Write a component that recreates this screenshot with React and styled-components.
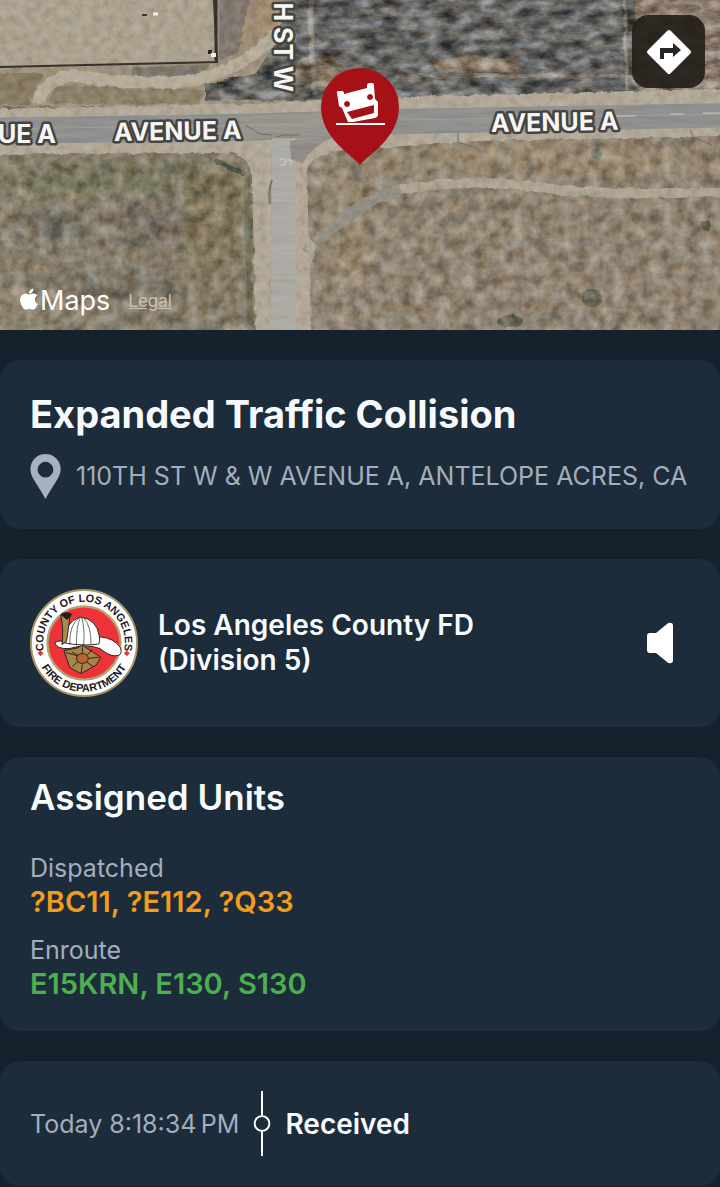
import React from 'react'
import styled, { createGlobalStyle } from 'styled-components'
import { FaApple } from 'react-icons/fa'

const GlobalStyle = createGlobalStyle`
  * {
    box-sizing: border-box;
  }
  body {
    margin: 0;
    background: #15212c;
    color: #f7fafc;
    font-family: Inter, 'Liberation Sans', sans-serif;
  }
  h1, h2, p, dl, dt, dd, ol {
    margin: 0;
    padding: 0;
  }
  button {
    border: 0;
    padding: 0;
    cursor: pointer;
  }
`

const Page = styled.main`
  display: flex;
  flex-direction: column;
  gap: 30px;
`

const MapArea = styled.section`
  position: relative;
  height: 330px;
  overflow: hidden;
  background: #8c8069;
`

const MapCanvas = styled.svg`
  display: block;
  width: 100%;
  height: 100%;
`

const RoadLabel = styled.text`
  font-size: 25px;
  font-weight: 700;
  fill: #f6f6f4;
  stroke: #45433f;
  stroke-width: 5px;
  stroke-linejoin: round;
  paint-order: stroke;
`

const DirectionsButton = styled.button`
  position: absolute;
  top: 15px;
  right: 15px;
  width: 73px;
  height: 73px;
  border-radius: 16px;
  background: rgba(37, 31, 27, 0.92);
  svg {
    display: block;
    margin: auto;
  }
`

const Attribution = styled.div`
  position: absolute;
  left: 18px;
  bottom: 12px;
  display: flex;
  align-items: center;
  gap: 18px;
`

const MapsMark = styled.span`
  display: flex;
  align-items: center;
  font-size: 27px;
  line-height: 34px;
  color: #fff;
  svg {
    width: 22px;
    height: 24px;
    margin-bottom: 4px;
  }
`

const LegalLink = styled.a`
  font-size: 17px;
  line-height: 20px;
  color: #c9c3b7;
`

const Card = styled.section`
  padding: ${props => (props.$tight ? '20px 30px 30px' : '30px')};
  border-radius: 20px;
  background: #1c2c3b;
`

const Title = styled.h1`
  font-size: 38px;
  line-height: 48px;
  font-weight: 700;
`

const Address = styled.p`
  display: flex;
  align-items: center;
  gap: 15px;
  margin-top: 16px;
  font-size: 25px;
  line-height: 45px;
  color: #a3afbc;
  svg {
    flex: none;
  }
`

const AgencyRow = styled.div`
  display: flex;
  align-items: center;
  gap: 20px;
`

const AgencyName = styled.h2`
  flex: 1;
  font-size: 28px;
  line-height: 35px;
  font-weight: 600;
`

const SoundButton = styled.button`
  display: grid;
  place-items: center;
  width: 60px;
  height: 60px;
  background: none;
`

const Heading = styled.h2`
  font-size: 35px;
  line-height: 40px;
  font-weight: 600;
`

const UnitList = styled.dl`
  display: grid;
  gap: 14px;
  margin-top: 34px;
  line-height: 34px;
`

const Status = styled.dt`
  font-size: 25px;
  color: #a3afbc;
`

const Units = styled.dd`
  font-size: 29px;
  font-weight: 600;
  color: ${props => props.$color};
`

const Timeline = styled.ol`
  list-style: none;
`

const Event = styled.li`
  display: flex;
  align-items: center;
`

const Time = styled.time`
  font-size: 25px;
  line-height: 34px;
  color: #a3afbc;
`

const TimelineDot = styled.svg`
  flex: none;
  margin: 0 14px;
`

const EventName = styled.strong`
  font-size: 28px;
  line-height: 34px;
  font-weight: 600;
`

const groups = [
  { status: 'Dispatched', units: '?BC11, ?E112, ?Q33', color: '#f39c1b' },
  { status: 'Enroute', units: 'E15KRN, E130, S130', color: '#4caf50' },
]

const events = [{ time: 'Today 8:18:34\u202fPM', name: 'Received' }]

// Ground texture: noise laid over whatever colour the shape has
const Texture = ({ id, freq, seed, contrast, edge = 5 }) => (
  <filter id={id} x="-5%" y="-5%" width="110%" height="110%" colorInterpolationFilters="sRGB">
    <feTurbulence type="fractalNoise" baseFrequency={freq} numOctaves="5" seed={seed} result="noise" />
    <feDisplacementMap in="SourceGraphic" in2="noise" scale={edge} xChannelSelector="R" yChannelSelector="G" result="shape" />
    <feColorMatrix
      in="noise"
      values={`${contrast} 0 0.15 0 ${0.44 - contrast / 2} ${contrast} 0 0 0 ${0.52 - contrast / 2} ${contrast} 0 -0.15 0 ${0.61 - contrast / 2} 0 0 0 0 1`}
      result="tone"
    />
    <feBlend in="tone" in2="shape" mode="soft-light" result="mix" />
    <feComposite in="mix" in2="shape" operator="in" />
  </filter>
)

const Satellite = () => (
  <MapCanvas viewBox="0 0 720 330" preserveAspectRatio="xMidYMid slice" role="img" aria-label="Satellite map of Avenue A">
    <defs>
      <Texture id="scrub" freq="0.08" seed="4" contrast={0.9} />
      <Texture id="burn" freq="0.05 0.1" seed="9" contrast={1.5} />
      <Texture id="dirt" freq="0.12" seed="2" contrast={0.4} edge={4} />
      <Texture id="asphalt" freq="0.02 0.2" seed="7" contrast={0.2} edge={2} />
      <filter id="soft" x="-50%" y="-50%" width="200%" height="200%">
        <feGaussianBlur stdDeviation="9" />
      </filter>
    </defs>

    <g filter="url(#scrub)">
      <rect x="-20" y="-20" width="760" height="370" fill="#8f826f" />
      <rect x="-20" y="140" width="275" height="200" fill="#877d69" />
      <g filter="url(#soft)">
        <ellipse cx="120" cy="180" rx="150" ry="14" fill="#747259" />
        <ellipse cx="52" cy="225" rx="20" ry="18" fill="#6b685b" />
        <ellipse cx="150" cy="225" rx="36" ry="20" fill="#726b5b" />
        <ellipse cx="110" cy="285" rx="80" ry="8" fill="#706b5c" />
        <ellipse cx="30" cy="300" rx="50" ry="8" fill="#9a8d77" />
        <ellipse cx="215" cy="225" rx="28" ry="60" fill="#807357" />
        <ellipse cx="345" cy="230" rx="24" ry="50" fill="#94856a" />
        <ellipse cx="540" cy="160" rx="180" ry="12" fill="#96866b" />
      </g>
      <path d="M247 180 L250 325" stroke="#6c6c50" strokeWidth="6" fill="none" />
      <path d="M215 160 L246 174" stroke="#4f5340" strokeWidth="5" />
      <ellipse cx="592" cy="298" rx="11" ry="9" fill="#62634f" />
      <ellipse cx="510" cy="321" rx="13" ry="6" fill="#5d604c" />
      <ellipse cx="706" cy="225" rx="5" ry="5" fill="#62644f" />
      <ellipse cx="598" cy="154" rx="6" ry="5" fill="#6b7162" />
    </g>

    <g filter="url(#dirt)">
      <path d="M-10 -10 H290 V106 H-10Z" fill="#9c8f79" />
      <path d="M-10 -10 H215 V62 L-10 69Z" fill="#aba08c" />
      <path d="M219 -10 H258 Q260 30 232 55 L219 61Z" fill="#7f766b" />
      <path d="M252 -10 H276 V25 L238 55Z" fill="#a08a70" />
      <path d="M132 68 L210 64 L200 80 L132 79Z" fill="#7f776b" />
      <path d="M-10 73 H45 L28 105 H-10Z" fill="#877a60" />
      <path d="M55 85 Q120 86 205 90 L200 104 H48Z" fill="#8b7f66" />
      <path d="M38 104 Q42 82 72 75 Q130 86 190 81 Q240 72 278 33" stroke="#b5aa96" strokeWidth="12" fill="none" />
    </g>
    <path d="M0 67 L217 62 L214 0" stroke="#34312d" strokeWidth="2" fill="none" />
    <path d="M216 0 V61" stroke="#34312d" strokeWidth="3" />
    <path d="M208 52 h4" stroke="#2d2b28" strokeWidth="4" />
    <path d="M211 55 h5" stroke="#f1efe9" strokeWidth="4" />
    <path d="M142 15 h5" stroke="#3a3733" strokeWidth="2" />
    <path d="M153 14 h5" stroke="#f1efe9" strokeWidth="3" />

    <g filter="url(#burn)">
      <path d="M288 -15 H640 V96 L400 99 L205 101 V84 L255 74 L278 40Z" fill="#656460" />
      <path d="M635 -15 H740 V92 H635Z" fill="#857565" />
      <path d="M430 62 Q480 50 525 64 L510 73 L440 72Z" fill="#897a67" />
      <path d="M300 58 Q330 48 350 70 L330 92 L290 84Z" fill="#7e705e" />
      <path d="M310 -10 L314 95" stroke="#8b8479" strokeWidth="5" />
      <path d="M395 76 H640" stroke="#857a6a" strokeWidth="4" />
      <path d="M624 -10 L627 90" stroke="#8d8679" strokeWidth="3" />
    </g>

    <g filter="url(#dirt)">
      <path d="M-20 109 L270 103 L330 99 L740 88 V136 L480 141 L345 150 Q312 154 307 170 L312 350 H256 L252 178 Q250 158 232 153 L-20 155Z" fill="#b0a694" />
      <path d="M306 252 Q350 205 400 190 Q470 176 560 190 Q640 196 740 191" stroke="#ada28f" strokeWidth="10" fill="none" />
      <path d="M306 252 Q350 205 400 188" stroke="#938d7f" strokeWidth="11" fill="none" />
      <path d="M306 235 L316 245 L309 275Z" fill="#b0a694" />
    </g>
    <g filter="url(#asphalt)">
      <path d="M-20 118 L240 114 L400 109 L740 103 V127 L400 134 L240 141 L-20 144Z" fill="#8e8e8b" />
      <path d="M272 138 H296 L296 350 H270Z" fill="#aca9a2" />
      <path d="M290 141 L340 135 Q308 146 303 164 L291 159Z" fill="#8f8b83" />
      <path d="M240 117 L330 112 L340 134 L240 139Z" fill="#97938a" />
    </g>
    <path d="M-5 129 L310 124 M400 120 L720 114" stroke="#aaa69a" strokeWidth="1" fill="none" opacity="0.7" />
    <path d="M616 116 h20 M670 114 h14 M703 113 h17" stroke="#ccc8bd" strokeWidth="1" />
    <path d="M272 180 Q268 190 270 204" stroke="#77736b" strokeWidth="2" fill="none" />
    <path d="M245 125 l15 9 l12 1 M276 137 l8 -2 l16 0 M458 133 v9 l18 6 M690 130 l4 8 l18 7" stroke="#716b5f" strokeWidth="1" fill="none" />
    <path d="M280 159 h5 v6 h-5 M287 160 h4 v5" stroke="#d2cfc6" strokeWidth="1" fill="none" />

    <RoadLabel x="56" y="143" textAnchor="end">UE A</RoadLabel>
    <RoadLabel x="114" y="141" transform="rotate(-1 114 141)">AVENUE A</RoadLabel>
    <RoadLabel x="491" y="132" transform="rotate(-1 491 132)">AVENUE A</RoadLabel>
    <RoadLabel x="92" y="-274" textAnchor="end" transform="rotate(90)">H ST W</RoadLabel>

    <path d="M360 165 C352 155 321 138 321 107 A39 39 0 0 1 399 107 C399 138 368 155 360 165Z" fill="#a51116" />
    <path
      fillRule="evenodd"
      fill="#fff"
      d="M337 93 Q336 91 339 91 L342 91 Q344 91 344 94 L367 88 L367 85 Q367 83 370 83 L372 83 Q374 83 374 86 L375 99 L378 102 V115 Q378 117 375 118 L353 122 H348 L342 108 L339 106Z
      M347 101 a3 3 0 1 0 .1 0Z M370 94 a3 3 0 1 0 .1 0Z M347 112 L374 105 V113 L352 119Z"
    />
    <path d="M336 124 H385" stroke="#fff" strokeWidth="2" />
  </MapCanvas>
)

const PinIcon = () => (
  <svg width="31" height="45" viewBox="0 0 31 46" aria-hidden="true">
    <path fillRule="evenodd" fill="#a7b1bc" d="M15.500 0 A15.500 15.500 0 0 0 0 15.500 C0 24 9 33 15.500 46 C22 33 31 24 31 15.500 A15.500 15.500 0 0 0 15.500 0Z M15.500 8 a8 8 0 1 1 -.1 0Z" />
  </svg>
)

const Seal = () => (
  <svg width="108" height="108" viewBox="1 1 328 328" role="img" aria-label="County of Los Angeles Fire Department">
    <defs>
      <path id="seal-top" d="M45.500 197 A124 124 0 1 1 284.500 197" />
      <path id="seal-bottom" d="M17 165 A148 148 0 0 0 313 165" />
    </defs>
    <circle cx="165" cy="165" r="161" fill="#fff" stroke="#a8986c" strokeWidth="6" />
    <circle cx="165" cy="165" r="111" fill="#ee3338" stroke="#b3a377" strokeWidth="7" />
    <g fontFamily="Liberation Sans, sans-serif" fontWeight="700" fontSize="33" fill="#1c1b1b" textAnchor="middle">
      <text><textPath href="#seal-top" startOffset="50%">COUNTY OF LOS ANGELES</textPath></text>
      <text><textPath href="#seal-bottom" startOffset="50%">FIRE DEPARTMENT</textPath></text>
    </g>
    <path d="M33 187 l9 9 l-9 9 l-9 -9Z M295 187 l9 9 l-9 9 l-9 -9Z" fill="#e5383b" />
    <g stroke="#2a251d" strokeWidth="3" strokeLinejoin="round">
      <path d="M76 164 Q84 156 104 160 L212 146 Q258 150 276 180 Q284 204 260 204 Q240 204 214 182 Q170 166 120 182 Q82 184 76 164Z" fill="#fff" />
      <path d="M104 164 Q106 100 154 86 Q204 92 212 146 Q214 160 210 168 Q158 176 104 164Z" fill="#fff" />
      <path d="M122 170 Q120 110 150 88 M142 172 Q142 110 154 88 M164 172 Q168 120 158 88 M186 170 Q188 116 164 88" fill="none" strokeWidth="2" />
      <path d="M94 80 Q104 70 124 76 Q120 92 120 104 L112 160 L98 170 Q104 120 94 80Z" fill="#a98c4c" />
      <path d="M95 79 Q110 68 128 78 L114 94Z" fill="#231e18" />
      <path d="M104 188 L146 180 L160 170 L172 180 L216 208 L202 232 L156 258 L122 240Z" fill="#a9854a" />
      <path d="M160 174 V196 M110 194 L146 204 M212 208 L178 212 M156 258 L160 230 M130 236 L148 220 M192 236 L172 222 M128 192 L146 202 M190 186 L174 202" />
      <ellipse cx="160" cy="212" rx="18" ry="15" fill="#b8652f" />
    </g>
  </svg>
)

const App = () => (
  <>
    <GlobalStyle />
    <Page>
      <MapArea>
        <Satellite />
        <DirectionsButton type="button" aria-label="Get directions">
          <svg width="46" height="46" viewBox="0 0 46 46">
            <path d="M23 3 L43 23 L23 43 L3 23Z" fill="#fff" stroke="#fff" strokeWidth="4" strokeLinejoin="round" />
            <path d="M14 30 V19 H27 V14 L35 21 L27 28 V24 H18 V30Z" fill="#2a2622" />
          </svg>
        </DirectionsButton>
        <Attribution>
          <MapsMark><FaApple aria-hidden="true" />Maps</MapsMark>
          <LegalLink href="#legal">Legal</LegalLink>
        </Attribution>
      </MapArea>

      <Card>
        <Title>Expanded Traffic Collision</Title>
        <Address>
          <PinIcon />
          110TH ST W &amp; W AVENUE A, ANTELOPE ACRES, CA
        </Address>
      </Card>

      <Card>
        <AgencyRow>
          <Seal />
          <AgencyName>Los Angeles County FD<br />(Division 5)</AgencyName>
          <SoundButton type="button" aria-label="Play dispatch audio">
            <svg width="28" height="42" viewBox="0 0 28 42">
              <path d="M4 11 H10 L21 2 Q23 0 25 1 Q27 1 27 4 V38 Q27 41 25 41 Q23 42 21 40 L10 31 H4 Q1 31 1 28 V14 Q1 11 4 11Z" fill="#fff" />
            </svg>
          </SoundButton>
        </AgencyRow>
      </Card>

      <Card $tight>
        <Heading>Assigned Units</Heading>
        <UnitList>
          {groups.map(group => (
            <div key={group.status}>
              <Status>{group.status}</Status>
              <Units $color={group.color}>{group.units}</Units>
            </div>
          ))}
        </UnitList>
      </Card>

      <Card>
        <Timeline>
          {events.map(event => (
            <Event key={event.name}>
              <Time>{event.time}</Time>
              <TimelineDot width="18" height="65" viewBox="0 0 18 66" aria-hidden="true">
                <path d="M9 0 V25 M9 41 V66" stroke="#fff" strokeWidth="2" />
                <circle cx="9" cy="33" r="7.500" fill="none" stroke="#fff" strokeWidth="2" />
              </TimelineDot>
              <EventName>{event.name}</EventName>
            </Event>
          ))}
        </Timeline>
      </Card>
    </Page>
  </>
)

export default App
